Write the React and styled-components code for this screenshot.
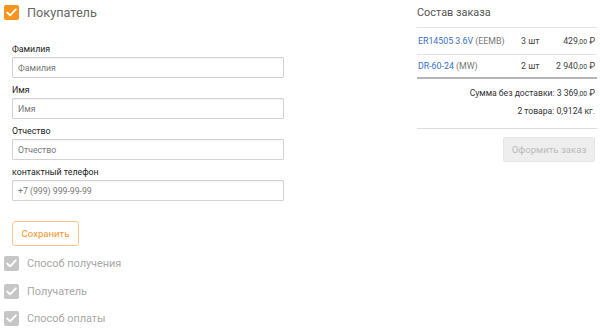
import React from "react";
import styled, { createGlobalStyle } from "styled-components";

const Global = createGlobalStyle`
  html, body { margin: 0; padding: 0; background: #fff; }
  body { font-family: Roboto, "Liberation Sans", Arial, sans-serif; }
  * { box-sizing: border-box; }
`;

const Page = styled.div`
  display: flex;
  width: 600px;
  height: 330px;
  overflow: hidden;
`;

const Left = styled.div`
  width: 417px;
  padding: 5px 0 0 4px;
  display: flex;
  flex-direction: column;
`;

const StepRow = styled.div`
  display: flex;
  align-items: center;
  gap: 8px;
  height: ${(p) => p.$h || 27.5}px;
`;

const Box = styled.span`
  width: 15px;
  height: 15px;
  border-radius: 2px;
  background: ${(p) => (p.$active ? "#f7941d" : "#c6c6c6")};
  display: inline-flex;
  align-items: center;
  justify-content: center;
  flex: none;
`;

const StepTitle = styled.span`
  font-size: ${(p) => (p.$active ? 12.7 : 10.9)}px;
  color: ${(p) => (p.$active ? "#666" : "#a8a8a8")};
`;

const Form = styled.div`
  padding: 23px 0 0 8px;
  width: 280px;
  display: flex;
  flex-direction: column;
`;

const Field = styled.div`
  display: flex;
  flex-direction: column;
  margin-bottom: 6px;
`;

const Label = styled.label`
  font-size: 8.8px;
  line-height: 12px;
  color: #222;
  margin-bottom: 2px;
`;

const Input = styled.input`
  width: 272px;
  height: 21px;
  border: 1px solid #d2d2d2;
  border-radius: 1px;
  padding: 0 5px;
  font-family: inherit;
  font-size: 8.7px;
  color: #333;
  outline: none;
  box-shadow: inset 0 1px 1px rgba(0,0,0,0.04);
  &::placeholder { color: #777; }
`;

const SaveButton = styled.button`
  margin-top: 14px;
  width: 67px;
  height: 25px;
  border: 1px solid #fdc98f;
  border-radius: 3px;
  background: #fff;
  color: #f7941d;
  font-family: inherit;
  font-size: 9.6px;
  padding: 0;
  margin-bottom: 4px;
`;

const SubSteps = styled.div`
  margin-left: -8px;
  display: flex;
  flex-direction: column;
`;

const Right = styled.div`
  width: 180px;
  padding-top: 4px;
  display: flex;
  flex-direction: column;
`;

const OrderTitle = styled.div`
  font-size: 10.9px;
  color: #555;
  height: 23px;
  line-height: 17px;
`;

const Row = styled.div`
  display: flex;
  align-items: center;
  height: ${(p) => (p.$last ? 23 : 27)}px;
  border-top: 1px solid #e3e3e3;
  font-size: 8.8px;
  color: #444;
  padding-right: 2px;
  white-space: nowrap;
`;

const Name = styled.div`
  flex: 1;
  padding-left: 1px;
  color: #3a6fc8;
  & span { color: #777; }
`;

const Qty = styled.div`
  width: 34px;
  color: #444;
`;

const Price = styled.div`
  width: 40px;
  text-align: right;
  color: #444;
`;

const Kop = styled.span`
  font-size: 6.8px;
`;

const ThickLine = styled.div`
  height: 2px;
  background: #b5b5b5;
`;

const Summary = styled.div`
  text-align: right;
  font-size: 8.6px;
  color: #333;
  line-height: 17px;
  padding-right: 2px;
  margin-top: ${(p) => p.$mt || 0}px;
`;

const Divider = styled.div`
  height: 1px;
  background: #ddd;
  margin-top: 8px;
`;

const OrderButton = styled.button`
  align-self: flex-end;
  margin: 8px 2px 0 0;
  width: 92px;
  height: 25px;
  background: #eeeeee;
  border: 1px solid #e6e6e6;
  border-radius: 2px;
  color: #bbb;
  font-family: inherit;
  font-size: 9.6px;
  padding: 0;
`;

const Check = () => (
  <svg width="11" height="9" viewBox="0 0 11 9">
    <path d="M1.2 4.6 L4.1 7.3 L9.8 1.4" fill="none" stroke="#fff" strokeWidth="1.9" strokeLinecap="round" strokeLinejoin="round" />
  </svg>
);

const fields = [
  { label: "Фамилия", ph: "Фамилия" },
  { label: "Имя", ph: "Имя" },
  { label: "Отчество", ph: "Отчество" },
  { label: "контактный телефон", ph: "+7 (999) 999-99-99" },
];

export default function App() {
  return (
    <>
      <Global />
      <Page>
        <Left>
          <StepRow $h={16}>
            <Box $active><Check /></Box>
            <StepTitle $active>Покупатель</StepTitle>
          </StepRow>
          <Form>
            {fields.map((f) => (
              <Field key={f.label}>
                <Label>{f.label}</Label>
                <Input placeholder={f.ph} />
              </Field>
            ))}
            <div>
              <SaveButton>Сохранить</SaveButton>
            </div>
            <SubSteps>
              <StepRow><Box><Check /></Box><StepTitle>Способ получения</StepTitle></StepRow>
              <StepRow><Box><Check /></Box><StepTitle>Получатель</StepTitle></StepRow>
              <StepRow><Box><Check /></Box><StepTitle>Способ оплаты</StepTitle></StepRow>
            </SubSteps>
          </Form>
        </Left>
        <Right>
          <OrderTitle>Состав заказа</OrderTitle>
          <Row>
            <Name>ER14505 3.6V <span>(EEMB)</span></Name>
            <Qty>3 шт</Qty>
            <Price>429<Kop>,00</Kop> ₽</Price>
          </Row>
          <Row $last>
            <Name>DR-60-24 <span>(MW)</span></Name>
            <Qty>2 шт</Qty>
            <Price>2 940<Kop>,00</Kop> ₽</Price>
          </Row>
          <ThickLine />
          <Summary $mt={6}>Сумма без доставки: 3 369<Kop>,00</Kop> ₽</Summary>
          <Summary>2 товара: 0,9124 кг.</Summary>
          <Divider />
          <OrderButton>Оформить заказ</OrderButton>
        </Right>
      </Page>
    </>
  );
}
